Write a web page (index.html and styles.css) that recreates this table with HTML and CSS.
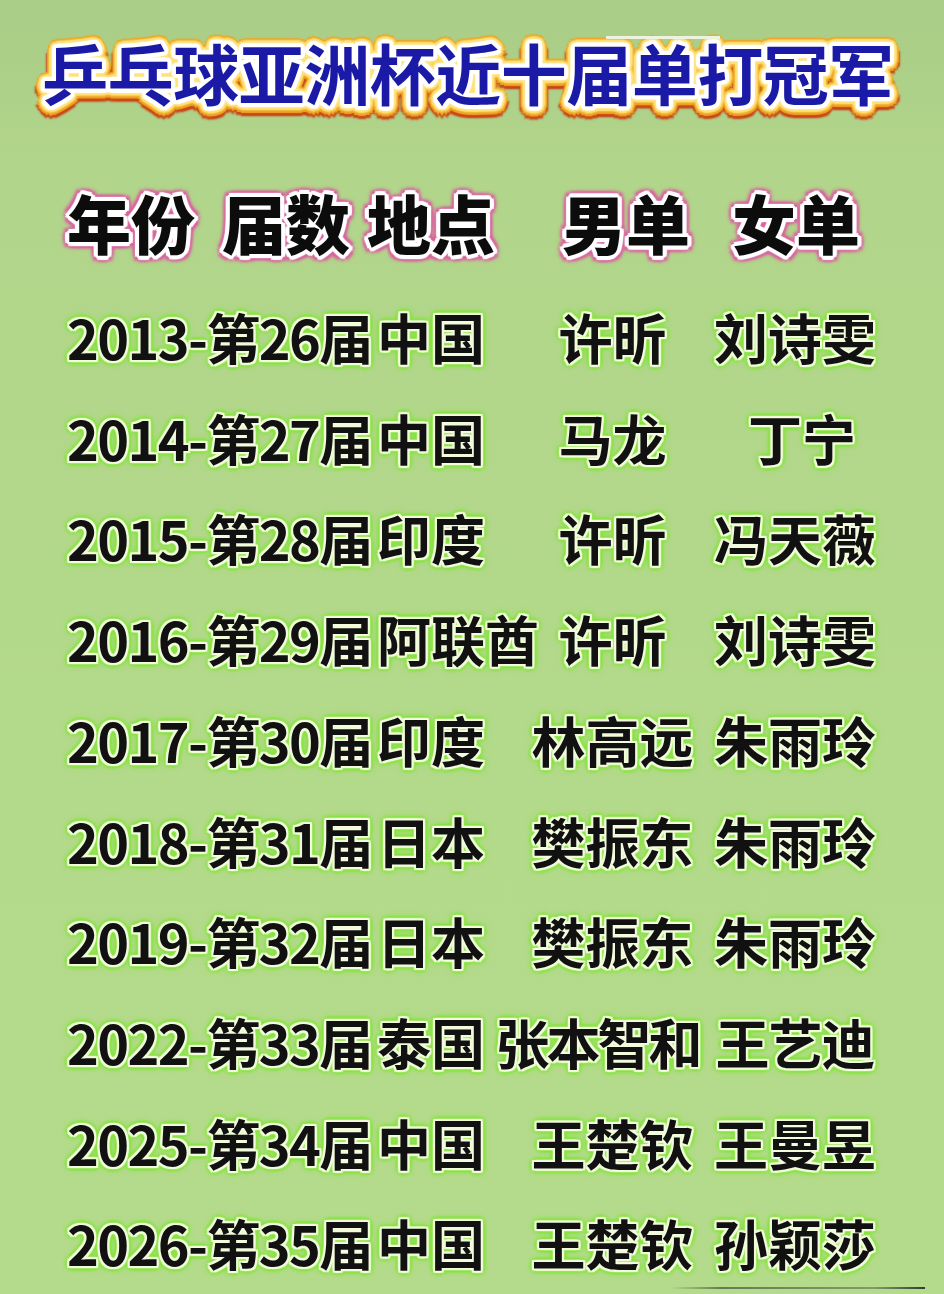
FILE: index.html
```html
<!DOCTYPE html>
<html lang="zh-CN">
<head>
<meta charset="utf-8">
<title>乒乓球亚洲杯近十届单打冠军</title>
<link rel="stylesheet" href="styles.css">
</head>
<body>
<div class="page">
  <div class="topbar"></div>
  <h1 class="title">乒乓球亚洲杯近十届单打冠军</h1>
  <div class="header">
    <span>年份</span><span>届数</span><span>地点</span><span>男单</span><span>女单</span>
  </div>
  <div class="rows">
    <div class="row"><span class="ed">2013-第26届</span><span class="place">中国</span><span class="male">许昕</span><span class="female">刘诗雯</span></div>
    <div class="row"><span class="ed">2014-第27届</span><span class="place">中国</span><span class="male">马龙</span><span class="female female--r">丁宁</span></div>
    <div class="row"><span class="ed">2015-第28届</span><span class="place">印度</span><span class="male">许昕</span><span class="female">冯天薇</span></div>
    <div class="row"><span class="ed">2016-第29届</span><span class="place">阿联酋</span><span class="male">许昕</span><span class="female">刘诗雯</span></div>
    <div class="row"><span class="ed">2017-第30届</span><span class="place">印度</span><span class="male">林高远</span><span class="female">朱雨玲</span></div>
    <div class="row"><span class="ed">2018-第31届</span><span class="place">日本</span><span class="male">樊振东</span><span class="female">朱雨玲</span></div>
    <div class="row"><span class="ed">2019-第32届</span><span class="place">日本</span><span class="male">樊振东</span><span class="female">朱雨玲</span></div>
    <div class="row row--wide"><span class="ed">2022-第33届</span><span class="place">泰国</span><span class="male">张本智和</span><span class="female">王艺迪</span></div>
    <div class="row"><span class="ed">2025-第34届</span><span class="place">中国</span><span class="male">王楚钦</span><span class="female">王曼昱</span></div>
    <div class="row"><span class="ed">2026-第35届</span><span class="place">中国</span><span class="male">王楚钦</span><span class="female">孙颖莎</span></div>
  </div>
  <div class="watermark"><div class="wm-line"></div></div>
  <div class="wm-dash"></div>
</div>
</body>
</html>
```
FILE: styles.css
```css
html, body {
  margin: 0;
  padding: 0;
}
body {
  width: 944px;
  height: 1294px;
  overflow: hidden;
  background: linear-gradient(to bottom, #a9cc87 0px, #b1d58a 160px, #b3d98a 700px, #b4db8b 1294px);
  font-family: "Noto Sans CJK SC", "Noto Sans", sans-serif;
}
.page {
  position: relative;
  width: 944px;
  height: 1294px;
}
.topbar {
  position: absolute;
  left: 606px;
  top: 0;
  width: 114px;
  height: 3px;
  background: #eef2df;
}
.title {
  margin: 36px 0 0 0;
  padding-right: 8px;
  font-size: 66px;
  line-height: 70px;
  font-weight: 700;
  text-align: center;
  color: #1b1aa6;
  letter-spacing: -0.5px;
  text-shadow:
    4px 0 1px #fff, -4px 0 1px #fff, 0 4px 1px #fff, 0 -4px 1px #fff,
    3px 3px 1px #fff, -3px 3px 1px #fff, 3px -3px 1px #fff, -3px -3px 1px #fff,
    4px 2px 1px #fff, -4px 2px 1px #fff, 4px -2px 1px #fff, -4px -2px 1px #fff,
    2px 4px 1px #fff, -2px 4px 1px #fff, 2px -4px 1px #fff, -2px -4px 1px #fff,
    7px 0 2px #ffe27a, -7px 0 2px #ffe27a, 0 7px 2px #ffe27a, 0 -7px 2px #ffe27a,
    5px 5px 2px #ffe27a, -5px 5px 2px #ffe27a, 5px -5px 2px #ffe27a, -5px -5px 2px #ffe27a,
    6px 3px 2px #ffe27a, -6px 3px 2px #ffe27a, 6px -3px 2px #ffe27a, -6px -3px 2px #ffe27a,
    3px 6px 2px #ffe27a, -3px 6px 2px #ffe27a, 3px -6px 2px #ffe27a, -3px -6px 2px #ffe27a,
    9px 1px 1px #eea21e, -9px 1px 1px #eea21e, 0 10px 1px #eea21e, 0 -9px 1px #eea21e,
    7px 7px 1px #eea21e, -7px 7px 1px #eea21e, 6px -6px 1px #eea21e, -6px -6px 1px #eea21e,
    8px 4px 1px #eea21e, -8px 4px 1px #eea21e, 8px -3px 1px #eea21e, -8px -3px 1px #eea21e,
    4px 9px 1px #eea21e, -4px 9px 1px #eea21e, 4px -8px 1px #eea21e, -4px -8px 1px #eea21e,
    8px 8px 2px #c9461a, -8px 8px 2px #c9461a, 0 13px 2px #c9461a, 5px 12px 2px #c9461a,
    -5px 12px 2px #c9461a, 10px 5px 2px #c9461a, -10px 5px 2px #c9461a;
}
.header {
  margin-top: 75px;
  padding-left: 67px;
  display: grid;
  grid-template-columns: 155px 145px 195px 170px auto;
  font-size: 64px;
  line-height: 80px;
  font-weight: 900;
  color: #0c0c0c;
  text-shadow:
    3px 0 0 #fff, -3px 0 0 #fff, 0 3px 0 #fff, 0 -3px 0 #fff,
    2px 2px 0 #fff, -2px 2px 0 #fff, 2px -2px 0 #fff, -2px -2px 0 #fff,
    4px 1px 1px #fff, -4px 1px 1px #fff, 1px 4px 1px #fff, -1px -4px 1px #fff,
    4px -1px 1px #fff, -4px -1px 1px #fff, -1px 4px 1px #fff, 1px -4px 1px #fff,
    6px 0 3px #d9629f, -6px 0 3px #d9629f, 0 6px 3px #d9629f, 0 -6px 3px #d9629f,
    5px 5px 3px #d9629f, -5px 5px 3px #d9629f, 5px -5px 3px #d9629f, -5px -5px 3px #d9629f,
    0 0 10px #d9629f;
}
.rows {
  margin-top: 26px;
}
.row {
  display: grid;
  grid-template-columns: 310px 153px 165px 200px;
  padding-left: 67px;
  font-size: 54px;
  line-height: 100.7px;
  font-weight: 700;
  color: #111;
  text-shadow:
    2px 0 1px #f2fbdc, -2px 0 1px #f2fbdc, 0 2px 1px #f2fbdc, 0 -2px 1px #f2fbdc,
    2px 2px 1px #f2fbdc, -2px 2px 1px #f2fbdc, 2px -2px 1px #f2fbdc, -2px -2px 1px #f2fbdc,
    4px 0 3px #86e43e, -4px 0 3px #86e43e, 0 4px 3px #86e43e, 0 -4px 3px #86e43e,
    3px 3px 3px #86e43e, -3px 3px 3px #86e43e, 3px -3px 3px #86e43e, -3px -3px 3px #86e43e,
    0 0 8px #7de03a;
}
.row span {
  white-space: nowrap;
}
.ed {
  letter-spacing: -1.6px;
}
.male,
.female {
  display: flex;
  justify-content: center;
}
.female--r {
  padding-left: 14px;
}
.row--wide .male {
  padding-right: 30px;
  letter-spacing: -3px;
}
.row--wide .female {
  padding-right: 0;
  letter-spacing: -1px;
}
.watermark {
  position: absolute;
  left: 700px;
  top: 1251px;
  width: 190px;
  height: 22px;
  background: linear-gradient(to bottom, rgba(180, 218, 139, 0.35), rgba(180, 218, 139, 0.75));
}
.wm-line {
  position: absolute;
  left: -30px;
  top: 0;
  width: 255px;
  height: 2px;
  background: linear-gradient(to right, rgba(90, 100, 80, 0), rgba(70, 80, 60, 0.7) 20%, rgba(90, 100, 80, 0.55) 80%, rgba(40, 40, 40, 0.9));
}
.wm-dash {
  position: absolute;
  left: 753px;
  top: 1281px;
  width: 52px;
  height: 4px;
  background: #e5b33c;
  border-radius: 2px;
}
```
